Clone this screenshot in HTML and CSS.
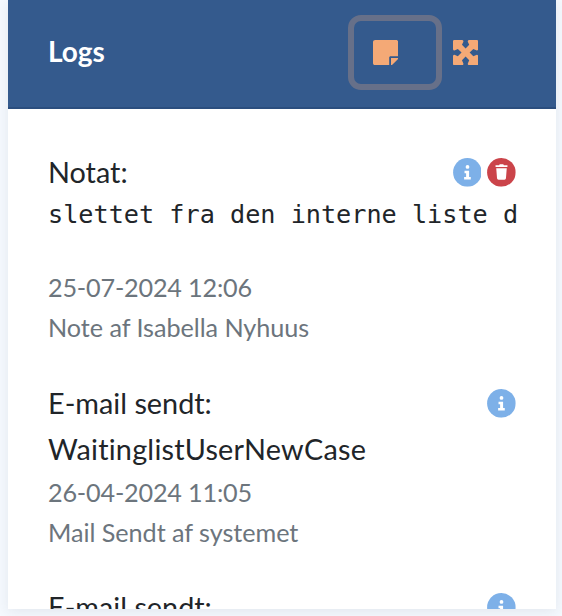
FILE: index.html
```
<!DOCTYPE html>
<html lang="da">
<head>
    <meta charset="UTF-8">
    <meta name="viewport" content="width=device-width, initial-scale=1.0">
    <title>Logs</title>
    <link rel="stylesheet" href="styles.css">
</head>
<body>
    <svg class="sprite" xmlns="http://www.w3.org/2000/svg">
        <symbol id="note" viewBox="0 32 448 448">
            <path d="M312 320h136V72c0-24-16-40-40-40H40C16 32 0 48 0 72v368c0 24 16 40 40 40h248V344c0-13.2 10.8-24 24-24zm129 55l-98 98c-4.5 4.5-10.6 7-17 7h-6V352h128v6.1c0 6.3-2.5 12.4-7 16.9z"/>
        </symbol>
        <symbol id="expand" viewBox="0 0 25 25">
            <path d="M1.2 0H9.2Q10.8.4 10.2 2L8.9 4.8 12.5 8.5 16.1 4.8 14.8 2Q14.2.4 15.8 0H23.8Q25 0 25 1.2V9.2Q24.6 10.8 23 10.2L20.2 8.9 16.5 12.5 20.2 16.1 23 14.8Q24.6 14.2 25 15.8V23.8Q25 25 23.8 25H15.8Q14.2 24.6 14.8 23L16.1 20.2 12.5 16.5 8.9 20.2 10.2 23Q10.8 24.6 9.2 25H1.2Q0 25 0 23.8V15.8Q.4 14.2 2 14.8L4.8 16.1 8.5 12.5 4.8 8.9 2 10.2Q.4 10.8 0 9.2V1.2Q0 0 1.2 0z"/>
        </symbol>
        <symbol id="info" viewBox="0 0 29 29">
            <circle cx="14.5" cy="14.5" r="14.4" fill="#7db0e8"/>
            <circle cx="14.6" cy="9" r="1.9"/>
            <path d="M11.6 12.8h4.6v6.4h1.7v2.5h-6.7v-2.5h2v-3.9h-1.6z"/>
        </symbol>
        <symbol id="trash" viewBox="0 0 29 29">
            <circle cx="14.5" cy="14.5" r="14.4" fill="#cb444a"/>
            <path d="M8.6 7.3h3.6l.6-.9h3.6l.6.9h3.6v1.8h-12zM9.3 10.2h10.6l-.8 10.2q-.1 1.5-1.5 1.5h-6q-1.4 0-1.5-1.5z"/>
        </symbol>
    </svg>

    <div class="card">
        <div class="card-header">
            <h2 class="card-title">Logs</h2>
            <div class="card-tools">
                <button type="button" class="btn-tool focused"><svg class="icon"><use href="#note"/></svg></button>
                <button type="button" class="btn-tool"><svg class="icon"><use href="#expand"/></svg></button>
            </div>
        </div>
        <div class="card-body">
            <div class="log log-note">
                <div class="log-head">
                    <span class="log-type">Notat:</span>
                    <div class="log-actions">
                        <svg class="badge"><use href="#info"/></svg>
                        <svg class="badge"><use href="#trash"/></svg>
                    </div>
                </div>
                <pre class="log-text">slettet fra den interne liste d</pre>
                <div class="log-meta log-date">25-07-2024 12:06</div>
                <div class="log-meta">Note af Isabella Nyhuus</div>
            </div>
            <div class="log">
                <div class="log-head">
                    <span class="log-type">E-mail sendt:</span>
                    <div class="log-actions">
                        <svg class="badge"><use href="#info"/></svg>
                    </div>
                </div>
                <div class="log-name">WaitinglistUserNewCase</div>
                <div class="log-meta log-date">26-04-2024 11:05</div>
                <div class="log-meta">Mail Sendt af systemet</div>
            </div>
            <div class="log">
                <div class="log-head">
                    <span class="log-type">E-mail sendt:</span>
                    <div class="log-actions">
                        <svg class="badge"><use href="#info"/></svg>
                    </div>
                </div>
            </div>
        </div>
    </div>
</body>
</html>
```

FILE: styles.css
```
* {
    box-sizing: border-box;
}
body {
    margin: 0;
    height: 616px;
    overflow: hidden;
    background-color: #f5f9fe;
    font-family: Lato, sans-serif;
    font-size: 28.8px;
    line-height: 46px;
    font-variant-ligatures: none;
    color: #212529;
}
.sprite {
    display: none;
}
.card {
    margin: 0 6px 0 8px;
    height: 609px;
    overflow: hidden;
    background-color: #fff;
    box-shadow: 0 3px 12px rgba(40, 50, 80, 0.09);
}
.card-header {
    display: flex;
    align-items: flex-start;
    justify-content: space-between;
    height: 109px;
    padding: 15px 68px 0 40px;
    background-color: #345a8d;
    border-bottom: 2px solid #2b4e7e;
}
.card-title {
    margin: 13px 0 0;
    font-size: 28px;
    font-weight: 700;
    color: #fff;
}
.card-tools {
    display: flex;
}
.btn-tool {
    display: flex;
    align-items: center;
    height: 75px;
    padding: 0 10px;
    background: none;
    border: 0;
    color: #f4a976;
}
.btn-tool.focused {
    width: 94px;
    margin-right: 0.4px;
    padding: 0 18.4px;
    border: 6px solid #677089;
    border-radius: 13px;
}
.icon {
    width: 25.2px;
    height: 25.2px;
    fill: currentColor;
}
.card-body {
    padding: 41px 38px 0 40px;
}
.log {
    margin-bottom: 33px;
}
.log-note {
    margin-bottom: 34px;
}
.log-head {
    display: flex;
    justify-content: space-between;
    height: 46px;
    padding-right: 2px;
}
.log-type {
    line-height: 44px;
}
.log-actions {
    display: flex;
    gap: 5.8px;
    padding-top: 8px;
}
.badge {
    width: 28.8px;
    height: 28.8px;
    fill: #fff;
}
.log-text {
    margin: 0 0 33px;
    font-family: "DejaVu Sans Mono", monospace;
    font-size: 25.2px;
    line-height: 38px;
}
.log-name {
    height: 45px;
    line-height: 44px;
    letter-spacing: 0.24px;
}
.log-meta {
    font-size: 25.2px;
    line-height: 40px;
    letter-spacing: -0.04px;
    color: #6c757d;
}
.log-date {
    letter-spacing: -0.18px;
}
```
